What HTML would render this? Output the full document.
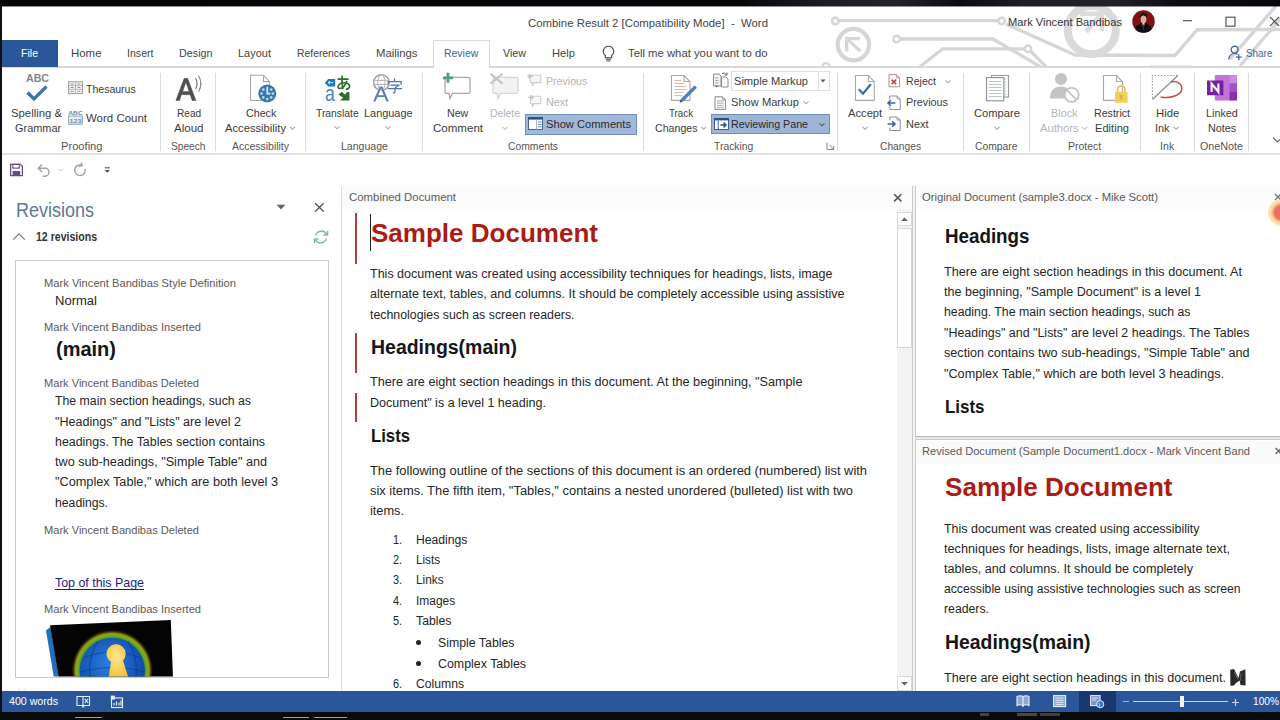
<!DOCTYPE html>
<html><head><meta charset="utf-8"><title>Word</title><style>
html,body{margin:0;padding:0;}
body{width:1280px;height:720px;overflow:hidden;background:#fff;position:relative;font-family:"Liberation Sans",sans-serif;}
.a{position:absolute;display:block;}
.t{position:absolute;white-space:pre;line-height:1;font-family:"Liberation Sans",sans-serif;display:block;}
svg{overflow:visible;}
</style></head>
<body>
<!-- p_frame -->
<div class="a" style="left:0px;top:0px;width:1280px;height:6px;background:#08080d;"></div>
<div class="a" style="left:0px;top:6px;width:1.5px;height:706px;background:#101016;"></div>
<div class="a" style="left:0px;top:712px;width:1280px;height:8px;background:#0b0b0d;"></div>
<div class="a" style="left:75px;top:716.5px;width:26.5px;height:1.8px;background:#a0a0a0;"></div>
<div class="a" style="left:283px;top:716.5px;width:26px;height:1.8px;background:#a0a0a0;"></div>
<div class="a" style="left:314px;top:716.5px;width:33px;height:1.8px;background:#a0a0a0;"></div>
<div class="a" style="left:980px;top:713px;width:9px;height:3px;background:#454545;"></div>
<div class="a" style="left:1017px;top:713px;width:20px;height:3px;background:#484848;"></div>
<div class="a" style="left:1040px;top:713px;width:20px;height:3px;background:#404040;"></div>
<!-- p_title -->
<svg class="a" style="left:0px;top:0px;" width="1280" height="72" viewBox="0 0 1280 72"><polyline points="835,20.7 1001,20.7" fill="none" stroke="#d6d6d6" stroke-width="3.3" stroke-linejoin="round"/><polyline points="897,39 993,39 1040,66.5" fill="none" stroke="#d6d6d6" stroke-width="3.3" stroke-linejoin="round"/><polyline points="920,66.5 943,48.8 1028,48.8" fill="none" stroke="#d6d6d6" stroke-width="3.3" stroke-linejoin="round"/><polyline points="1028,48.8 1046,66.5" fill="none" stroke="#d6d6d6" stroke-width="3.3" stroke-linejoin="round"/><polyline points="1006,24 1075,55 1175,55.5 1197,29.8 1280,29.5" fill="none" stroke="#d6d6d6" stroke-width="3.4" stroke-linejoin="round"/><polyline points="1276,6 1230,59" fill="none" stroke="#d6d6d6" stroke-width="3.4" stroke-linejoin="round"/><polyline points="1282,17 1240,66" fill="none" stroke="#d6d6d6" stroke-width="3.4" stroke-linejoin="round"/><polyline points="1150,66.5 1192,66.5" fill="none" stroke="#d6d6d6" stroke-width="2" stroke-linejoin="round"/><circle cx="853.4" cy="44.6" r="15.7" fill="none" stroke="#d6d6d6" stroke-width="4.2"/><path d="M845 37 H860 v3.300 H850.800 L861.500 50 l-2.400 2.400 L848.300 42 V51.600 H845z" fill="#d6d6d6"/><circle cx="1091.8" cy="30" r="24" fill="none" stroke="#dadada" stroke-width="8"/><path d="M1080 11.600 H1104 V31 h-4.500 V19.500 L1088 33.500 l-3.500 -3.500 L1096.500 16 H1080z" fill="#dcdcdc"/><circle cx="835.3" cy="21" r="3.3" fill="#fff" stroke="#d6d6d6" stroke-width="2.4"/><circle cx="1001.6" cy="21" r="3.3" fill="#fff" stroke="#d6d6d6" stroke-width="2.4"/><circle cx="896.6" cy="39" r="3.3" fill="#fff" stroke="#d6d6d6" stroke-width="2.4"/><circle cx="1028" cy="48.8" r="3.3" fill="#fff" stroke="#d6d6d6" stroke-width="2.4"/><circle cx="826" cy="66.5" r="3.4" fill="#fff" stroke="#d6d6d6" stroke-width="2.4"/></svg>
<div class="a" style="left:0px;top:0px;width:1280px;height:6px;background:linear-gradient(90deg,#050508 0%,#07070b 58%,#1c1c24 64%,#23232b 70%,#0b0b10 75%,#1e1e26 80%,#22222a 87%,#0d0d12 92%,#08080c 100%);"></div>
<div class="a" style="left:0px;top:6px;width:1280px;height:1px;background:rgba(8,8,13,0.45);"></div>
<span class="t" style="left:528.00px;top:18px;font-size:11.5px;color:#444;transform:scaleX(0.9890);transform-origin:0 0;">Combine Result 2 [Compatibility Mode]  -  Word</span>
<span class="t" style="left:1008.00px;top:17px;font-size:11.5px;color:#333;transform:scaleX(0.9657);transform-origin:0 0;">Mark Vincent Bandibas</span>
<svg class="a" style="left:1131.5px;top:9.8px;" width="23" height="23" viewBox="0 0 23 23"><defs><clipPath id="avc"><circle cx="11.5" cy="11.5" r="11.2"/></clipPath></defs><circle cx="11.5" cy="11.5" r="11.2" fill="#7e1215"/><g clip-path="url(#avc)"><path d="M2 24 L4 16.500 L9 13 L14 13 L19 16.500 L21 24z" fill="#100c10"/><path d="M10.400 13 L11.500 20 L12.600 13z" fill="#e9e2e2"/><path d="M11.100 14.500 h0.800 l0.300 5 l-0.700 1 l-0.700 -1z" fill="#3a2a30"/><ellipse cx="11.500" cy="9" rx="2.900" ry="4.200" fill="#dcb0a2"/><path d="M8 8.200 Q8 2.800 11.500 2.800 Q15 2.800 15 8.200 Q13.500 5.400 11.500 5.600 Q9.500 5.400 8 8.200z" fill="#1c0f0e"/></g></svg>
<svg class="a" style="left:0px;top:0px;" width="1280" height="40" viewBox="0 0 1280 40"><path d="M1183 20.7h9" stroke="#555" stroke-width="1.2"/><rect x="1226" y="17.2" width="9" height="9" fill="none" stroke="#555" stroke-width="1.2"/><path d="M1270 17l9 9M1279 17l-9 9" stroke="#555" stroke-width="1.2"/></svg>
<!-- p_ribbon -->
<div class="a" style="left:2px;top:67.5px;width:1278px;height:85.5px;background:#fff;"></div>
<div class="a" style="left:2px;top:66px;width:1278px;height:1.7px;background:#d8d8d8;"></div>
<div class="a" style="left:2px;top:153px;width:1278px;height:1.5px;background:#e2e2e2;"></div>
<div class="a" style="left:2px;top:39.5px;width:55.5px;height:27px;background:#2b579a;"></div>
<span class="t" style="left:20.50px;top:48px;font-size:11.5px;color:#fff;transform:scaleX(0.9174);transform-origin:0 0;">File</span>
<span class="t" style="left:70.50px;top:48px;font-size:11.5px;color:#444;transform:scaleX(0.9942);transform-origin:0 0;">Home</span>
<span class="t" style="left:126.50px;top:48px;font-size:11.5px;color:#444;transform:scaleX(0.9214);transform-origin:0 0;">Insert</span>
<span class="t" style="left:179.00px;top:48px;font-size:11.5px;color:#444;transform:scaleX(0.9358);transform-origin:0 0;">Design</span>
<span class="t" style="left:238.00px;top:48px;font-size:11.5px;color:#444;transform:scaleX(0.9557);transform-origin:0 0;">Layout</span>
<span class="t" style="left:297.00px;top:48px;font-size:11.5px;color:#444;transform:scaleX(0.9012);transform-origin:0 0;">References</span>
<span class="t" style="left:376.00px;top:48px;font-size:11.5px;color:#444;transform:scaleX(0.9838);transform-origin:0 0;">Mailings</span>
<span class="t" style="left:503.00px;top:48px;font-size:11.5px;color:#444;transform:scaleX(0.9304);transform-origin:0 0;">View</span>
<span class="t" style="left:552.00px;top:48px;font-size:11.5px;color:#444;transform:scaleX(0.9724);transform-origin:0 0;">Help</span>
<div class="a" style="left:432.5px;top:39.5px;width:57px;height:28px;background:#fff;border:1px solid #dadada;border-bottom:none;box-sizing:border-box;"></div>
<span class="t" style="left:443.70px;top:48px;font-size:11.5px;color:#41649c;transform:scaleX(0.9096);transform-origin:0 0;">Review</span>
<svg class="a" style="left:600px;top:44px;" width="18" height="20" viewBox="0 0 18 20"><path d="M8.5 2.2 a5.2 5.2 0 0 1 3.2 9.3 v2.2 h-6.4 v-2.2 a5.2 5.2 0 0 1 3.2 -9.3z" fill="none" stroke="#444" stroke-width="1.1"/><path d="M5.8 15.2h5.4M6.6 16.9h3.8" stroke="#444" stroke-width="1"/></svg>
<span class="t" style="left:628.00px;top:48px;font-size:11.5px;color:#444;transform:scaleX(0.9830);transform-origin:0 0;">Tell me what you want to do</span>
<svg class="a" style="left:1227px;top:44px;" width="16" height="18" viewBox="0 0 16 18"><circle cx="7.6" cy="5.6" r="3.4" fill="none" stroke="#3b5f97" stroke-width="1.2"/><path d="M1.8 15.5 c0.2 -4.2 3 -6 5.8 -6 c1.2 0 2.2 0.3 3 0.8" fill="none" stroke="#3b5f97" stroke-width="1.2"/><path d="M11.8 10.2v6M8.8 13.2h6" stroke="#3b5f97" stroke-width="1.2"/></svg>
<span class="t" style="left:1246.00px;top:48px;font-size:11.5px;color:#41649c;transform:scaleX(0.8602);transform-origin:0 0;">Share</span>
<div class="a" style="left:160.0px;top:72.5px;width:1px;height:78px;background:#dcdcdc;"></div>
<div class="a" style="left:214.5px;top:72.5px;width:1px;height:78px;background:#dcdcdc;"></div>
<div class="a" style="left:305.0px;top:72.5px;width:1px;height:78px;background:#dcdcdc;"></div>
<div class="a" style="left:421.5px;top:72.5px;width:1px;height:78px;background:#dcdcdc;"></div>
<div class="a" style="left:643.2px;top:72.5px;width:1px;height:78px;background:#dcdcdc;"></div>
<div class="a" style="left:837.0px;top:72.5px;width:1px;height:78px;background:#dcdcdc;"></div>
<div class="a" style="left:963.2px;top:72.5px;width:1px;height:78px;background:#dcdcdc;"></div>
<div class="a" style="left:1029.0px;top:72.5px;width:1px;height:78px;background:#dcdcdc;"></div>
<div class="a" style="left:1139.5px;top:72.5px;width:1px;height:78px;background:#dcdcdc;"></div>
<div class="a" style="left:1194.0px;top:72.5px;width:1px;height:78px;background:#dcdcdc;"></div>
<div class="a" style="left:1248.2px;top:72.5px;width:1px;height:78px;background:#dcdcdc;"></div>
<span class="t" style="left:60.50px;top:141px;font-size:11px;color:#555;transform:scaleX(1.0129);transform-origin:0 0;">Proofing</span>
<span class="t" style="left:170.50px;top:141px;font-size:11px;color:#555;transform:scaleX(0.9247);transform-origin:0 0;">Speech</span>
<span class="t" style="left:231.70px;top:141px;font-size:11px;color:#555;transform:scaleX(0.9515);transform-origin:0 0;">Accessibility</span>
<span class="t" style="left:340.50px;top:141px;font-size:11px;color:#555;transform:scaleX(0.9603);transform-origin:0 0;">Language</span>
<span class="t" style="left:508.00px;top:141px;font-size:11px;color:#555;transform:scaleX(0.9402);transform-origin:0 0;">Comments</span>
<span class="t" style="left:713.70px;top:141px;font-size:11px;color:#555;transform:scaleX(0.9408);transform-origin:0 0;">Tracking</span>
<span class="t" style="left:879.50px;top:141px;font-size:11px;color:#555;transform:scaleX(0.9311);transform-origin:0 0;">Changes</span>
<span class="t" style="left:975.00px;top:141px;font-size:11px;color:#555;transform:scaleX(0.9394);transform-origin:0 0;">Compare</span>
<span class="t" style="left:1067.50px;top:141px;font-size:11px;color:#555;transform:scaleX(0.9527);transform-origin:0 0;">Protect</span>
<span class="t" style="left:1159.50px;top:141px;font-size:11px;color:#555;transform:scaleX(0.9677);transform-origin:0 0;">Ink</span>
<span class="t" style="left:1200.00px;top:141px;font-size:11px;color:#555;transform:scaleX(0.9767);transform-origin:0 0;">OneNote</span>
<span class="t" style="left:25.70px;top:73px;font-size:11px;color:#858585;font-weight:bold;transform:scaleX(0.9651);transform-origin:0 0;">ABC</span>
<svg class="a" style="left:25px;top:84px;" width="24" height="18" viewBox="0 0 24 18"><path d="M2.5 8.5 L9 15 L21.5 2.5" fill="none" stroke="#3f72ad" stroke-width="3.2"/></svg>
<span class="t" style="left:11.00px;top:108px;font-size:11.5px;color:#3c3c3c;transform:scaleX(0.9848);transform-origin:0 0;">Spelling &amp;</span>
<span class="t" style="left:14.50px;top:123px;font-size:11.5px;color:#3c3c3c;transform:scaleX(0.9515);transform-origin:0 0;">Grammar</span>
<svg class="a" style="left:68px;top:80.5px;" width="15" height="14" viewBox="0 0 15 14"><rect x="0.6" y="0.8" width="13.8" height="11.8" fill="#f4f4f4" stroke="#9a9a9a" stroke-width="1"/><path d="M7.5 1v11.5M1 4.6h13M1 8.4h13" stroke="#b0b0b0" stroke-width="0.9"/><path d="M2.6 3h3M2.6 6.5h3M9.4 3h3M9.4 6.5h3M2.6 10.4h3M9.4 10.4h3" stroke="#8c8c8c" stroke-width="0.9"/></svg>
<span class="t" style="left:86.00px;top:84px;font-size:11.5px;color:#3c3c3c;transform:scaleX(0.9147);transform-origin:0 0;">Thesaurus</span>
<svg class="a" style="left:68px;top:109px;" width="15" height="16" viewBox="0 0 15 16"><text x="0.3" y="5.6" font-family="Liberation Sans" font-weight="bold" font-size="6.2" fill="#6f86a3" textLength="14.4" lengthAdjust="spacingAndGlyphs">ABC</text><rect x="0.6" y="7" width="13.8" height="8.2" fill="#e9eef4" stroke="#8aa0bb" stroke-width="1"/><text x="1.6" y="13.8" font-family="Liberation Sans" font-weight="bold" font-size="6.2" fill="#7088a6" textLength="11.8" lengthAdjust="spacingAndGlyphs">123</text></svg>
<span class="t" style="left:86.00px;top:113px;font-size:11.5px;color:#3c3c3c;transform:scaleX(0.9975);transform-origin:0 0;">Word Count</span>
<svg class="a" style="left:174px;top:73px;" width="30" height="30" viewBox="0 0 30 30"><path d="M2 27.4 L10.2 5.5 h3.4 L21.8 27.4 h-3.6 l-2 -5.8 h-8.8 l-2 5.8z M8.5 18.7 h6.8 l-3.4 -9.9z" fill="#505050" stroke="#505050" stroke-width="0.700" fill-rule="evenodd"/><path d="M21.5 5 q3 5.5 0.2 11" fill="none" stroke="#7a7a7a" stroke-width="1.2"/><path d="M24.5 2.5 q4.6 8 0.2 16" fill="none" stroke="#8a8a8a" stroke-width="1.2"/></svg>
<span class="t" style="left:176.50px;top:108px;font-size:11.5px;color:#3c3c3c;transform:scaleX(0.8802);transform-origin:0 0;">Read</span>
<span class="t" style="left:173.50px;top:123px;font-size:11.5px;color:#3c3c3c;transform:scaleX(1.0029);transform-origin:0 0;">Aloud</span>
<svg class="a" style="left:248px;top:73px;" width="30" height="32" viewBox="0 0 30 32"><path d="M2.500 2.300 h13 l6 6.300 v18.900 h-19z" fill="#fff" stroke="#a6a6a6" stroke-width="1.100"/><path d="M15.500 2.300 v6.300 h6" fill="none" stroke="#a6a6a6" stroke-width="1.100"/><circle cx="19.250" cy="20.500" r="9" fill="#3b75a9"/><circle cx="24.85" cy="20.50" r="1.35" fill="#b9daf4"/><circle cx="23.21" cy="24.46" r="1.35" fill="#b9daf4"/><circle cx="19.25" cy="26.10" r="1.35" fill="#b9daf4"/><circle cx="15.29" cy="24.46" r="1.35" fill="#b9daf4"/><circle cx="13.65" cy="20.50" r="1.35" fill="#b9daf4"/><circle cx="15.29" cy="16.54" r="1.35" fill="#b9daf4"/><circle cx="23.21" cy="16.54" r="1.35" fill="#b9daf4"/><path d="M19.250 13.800 v6.900 h3" fill="none" stroke="#d6ebfc" stroke-width="1.700"/></svg>
<span class="t" style="left:245.70px;top:108px;font-size:11.5px;color:#3c3c3c;transform:scaleX(0.9295);transform-origin:0 0;">Check</span>
<span class="t" style="left:225.00px;top:123px;font-size:11.5px;color:#3c3c3c;transform:scaleX(0.9740);transform-origin:0 0;">Accessibility</span>
<svg class="a" style="left:323px;top:73px;" width="30" height="30" viewBox="0 0 30 30"><path d="M1.800 9.700 L5.200 6 h7 v7.400 h-7z" fill="#1b7ac6"/><path d="M7 8 l-1.800 1.700 l1.800 1.700 M5.400 9.700 h4.800" fill="none" stroke="#e8f3fc" stroke-width="1"/><text x="2" y="27.700" font-family="Liberation Sans" font-size="21.500" fill="#3f88c8" textLength="9.800" lengthAdjust="spacingAndGlyphs">a</text><path d="M14.600 6.200 h11 M19.200 2.600 c-0.400 4.600 -0.200 9 0.600 13.400" fill="none" stroke="#2b6e2b" stroke-width="1.700"/><path d="M23.800 7.800 c-1 4.400 -4.400 8.200 -7.400 7.600 c-2.400 -0.600 -1.400 -4.200 2 -5.200 c4 -1.200 8.200 0.400 8.200 3 c0 1.800 -1.600 2.800 -3.600 3.200" fill="none" stroke="#2b6e2b" stroke-width="1.600"/><path d="M15.400 21.400 l3.400 -2.600 l3.200 3 l2 -2.800 h2.400 v8.400 h-9.400 l3.200 -2.600z" fill="#2b6e2b"/></svg>
<svg class="a" style="left:371px;top:72px;" width="32" height="31" viewBox="0 0 32 31"><circle cx="10.400" cy="10.500" r="7.800" fill="#fff" stroke="#9c9c9c" stroke-width="1.500"/><path d="M3.200 8.400 h14.400 M3.400 12.600 h14" fill="none" stroke="#b2b2b2" stroke-width="1"/><ellipse cx="10.400" cy="10.500" rx="3.600" ry="7.800" fill="none" stroke="#b2b2b2" stroke-width="1"/><path d="M2.200 29.600 L8.700 14.400 h2.600 L17.800 29.600 h-2.300 l-1.900 -4.600 h-7.200 l-1.900 4.600z M7.200 23.200 h5.600 l-2.800 -6.800z" fill="#5c7fae" fill-rule="evenodd" stroke="#fff" stroke-width="0.700" paint-order="stroke"/><path d="M17.200 12.400 v-2.800 h13 v2.800 M23.600 6.200 v3.200 M19.400 13.200 h8.400 l-3.800 2.800 M16.600 16.600 h14.400 M24 16 v3.600 q0 1.400 -2.200 1.200" fill="none" stroke="#4a7ab2" stroke-width="1.300"/></svg>
<span class="t" style="left:316.00px;top:108px;font-size:11.5px;color:#3c3c3c;transform:scaleX(0.8987);transform-origin:0 0;">Translate</span>
<span class="t" style="left:364.00px;top:108px;font-size:11.5px;color:#3c3c3c;transform:scaleX(0.9479);transform-origin:0 0;">Language</span>
<svg class="a" style="left:441px;top:72px;" width="32" height="30" viewBox="0 0 32 30"><path d="M5.5 5.4 h22 q1.500 0 1.500 1.500 v13 q0 1.500 -1.500 1.500 h-16 l-2.600 5 l-0.800 -5 h-2.600 q-1.500 0 -1.500 -1.500 v-13 q0 -1.500 1.500 -1.500z" fill="#fff" stroke="#a8a8a8" stroke-width="1.3"/><path d="M7 0.8 v10 M2 5.8 h10" stroke="#5a9a7c" stroke-width="2.8"/></svg>
<span class="t" style="left:446.70px;top:108px;font-size:11.5px;color:#3c3c3c;transform:scaleX(0.9258);transform-origin:0 0;">New</span>
<span class="t" style="left:432.50px;top:123px;font-size:11.5px;color:#3c3c3c;transform:scaleX(1.0030);transform-origin:0 0;">Comment</span>
<svg class="a" style="left:489px;top:72px;" width="32" height="30" viewBox="0 0 32 30"><path d="M5.5 5.4 h22 q1.500 0 1.500 1.500 v13 q0 1.500 -1.500 1.500 h-16 l-2.600 5 l-0.800 -5 h-2.600 q-1.500 0 -1.500 -1.500 v-13 q0 -1.500 1.500 -1.500z" fill="#f3f1f2" stroke="#d6d6d6" stroke-width="1.3"/><path d="M1.5 1.8 l12 10 M13.5 1.8 l-12 10" stroke="#c2c2c2" stroke-width="2"/></svg>
<span class="t" style="left:490.00px;top:108px;font-size:11.5px;color:#b4b4b4;transform:scaleX(0.9024);transform-origin:0 0;">Delete</span>
<svg class="a" style="left:527px;top:73px;" width="15" height="14" viewBox="0 0 15 14"><path d="M3.4 2.2 h10.4 v7.4 h-6.8 l-1.6 2.6 l-0.2 -2.6 h-1.8z" fill="#f6f6f6" stroke="#cdcdcd" stroke-width="1.1"/><path d="M1 3.4 h5 M3.2 1.2 L1 3.4 l2.2 2.2" fill="none" stroke="#c0c6c2" stroke-width="1.4"/></svg>
<span class="t" style="left:545.70px;top:76px;font-size:11.5px;color:#b4b4b4;transform:scaleX(0.9230);transform-origin:0 0;">Previous</span>
<svg class="a" style="left:527px;top:94px;" width="15" height="14" viewBox="0 0 15 14"><path d="M3.4 2.2 h10.4 v7.4 h-6.8 l-1.6 2.6 l-0.2 -2.6 h-1.8z" fill="#f6f6f6" stroke="#cdcdcd" stroke-width="1.1"/><path d="M1 3.4 h5 M3.8 1.2 L6 3.4 l-2.2 2.2" fill="none" stroke="#c0c6c2" stroke-width="1.4"/></svg>
<span class="t" style="left:545.70px;top:97px;font-size:11.5px;color:#b4b4b4;transform:scaleX(0.9431);transform-origin:0 0;">Next</span>
<div class="a" style="left:525px;top:113.5px;width:112px;height:21px;background:#a3b8d9;border:1px solid #7391c0;box-sizing:border-box;"></div>
<svg class="a" style="left:528px;top:117px;" width="15" height="13" viewBox="0 0 15 13"><rect x="0.5" y="0.5" width="14" height="12" fill="#fff" stroke="#4a6796" stroke-width="1"/><rect x="0" y="0" width="15" height="2.6" fill="#2f4f86"/><path d="M8.6 2.6v10" stroke="#8fa3c4" stroke-width="0.9"/><path d="M10 5h3.6M10 7.4h3.6M10 9.8h3.6" stroke="#6f86ad" stroke-width="1"/></svg>
<span class="t" style="left:545.70px;top:119px;font-size:11.5px;color:#2a2a2a;transform:scaleX(0.9708);transform-origin:0 0;">Show Comments</span>
<svg class="a" style="left:668px;top:73px;" width="30" height="30" viewBox="0 0 30 30"><path d="M3.5 2.5 h12.5 l6 6 v18.9 h-18.5z" fill="#fff" stroke="#a9a9a9" stroke-width="1.1"/><path d="M16 2.5 v6 h6" fill="none" stroke="#a9a9a9" stroke-width="1.1"/><path d="M6.5 7.500h7M6.5 13.500h12M6.5 19.500h9" stroke="#d9b8b4" stroke-width="1"/><path d="M6.5 10.500h10M6.5 16.500h12M6.5 22.500h8" stroke="#c4c4c4" stroke-width="1"/><path d="M26.600 12.800 l2 1.900 L15.400 28 l-3.400 1.300 l1.200 -3.400z" fill="#4a7fbe" stroke="#3a6aa6" stroke-width="0.5"/><path d="M11.6 29.6 l1 -2.6 l1.6 1.6z" fill="#444"/></svg>
<span class="t" style="left:669.00px;top:108px;font-size:11.5px;color:#3c3c3c;transform:scaleX(0.8473);transform-origin:0 0;">Track</span>
<span class="t" style="left:654.50px;top:123px;font-size:11.5px;color:#3c3c3c;transform:scaleX(0.9232);transform-origin:0 0;">Changes</span>
<svg class="a" style="left:712px;top:72px;" width="17" height="16" viewBox="0 0 17 16"><path d="M1.5 2 h5.5 l2 2 v10 h-7.5z" fill="#f3f3f3" stroke="#8e8e8e" stroke-width="1"/><path d="M9.5 5 h4.5 l2 2 v8 h-6.5z" fill="#fff" stroke="#8e8e8e" stroke-width="1"/><path d="M3 6h3.5M3 8.5h3.5M3 11h3.5" stroke="#a7a7a7" stroke-width="0.9"/><path d="M10 1.5 q3 -1.5 5 1.5 M15 0.5 v2.6 h-2.6" fill="none" stroke="#6a6a6a" stroke-width="1"/><path d="M4.5 15.6 l1.8 -2 l-3.6 0z" fill="#6a6a6a"/></svg>
<div class="a" style="left:731px;top:70.5px;width:98.5px;height:20.5px;background:#fff;border:1px solid #dedede;box-sizing:border-box;"></div>
<div class="a" style="left:817.5px;top:70.5px;width:1px;height:20.5px;background:#e2e2e2;"></div>
<span class="t" style="left:734.00px;top:76px;font-size:11.5px;color:#3c3c3c;transform:scaleX(0.9648);transform-origin:0 0;">Simple Markup</span>
<svg class="a" style="left:714px;top:95.5px;" width="13" height="14" viewBox="0 0 13 14"><path d="M1 0.8 h7.6 l3 3 v9.6 h-10.6z" fill="#fff" stroke="#8b8b8b" stroke-width="1"/><path d="M8.6 0.8 v3 h3" fill="none" stroke="#8b8b8b" stroke-width="0.9"/><path d="M3 5h6.6M3 7.2h6.6M3 9.4h6.6M3 11.4h6.6" stroke="#9d9d9d" stroke-width="0.9"/></svg>
<span class="t" style="left:731.00px;top:97px;font-size:11.5px;color:#3c3c3c;transform:scaleX(0.9671);transform-origin:0 0;">Show Markup</span>
<div class="a" style="left:710.5px;top:113.7px;width:119.5px;height:20.8px;background:#9fb5d8;border:1px solid #6f8cbc;box-sizing:border-box;"></div>
<svg class="a" style="left:713.5px;top:117.5px;" width="15" height="12" viewBox="0 0 15 12"><rect x="0.5" y="0.5" width="14" height="11" fill="#fff" stroke="#3f5f93" stroke-width="1"/><rect x="0" y="0" width="15" height="2.4" fill="#2f4f86"/><path d="M4.2 2.4v9.4" stroke="#3f5f93" stroke-width="1"/><path d="M6.4 7h5.4 M9.6 4.6 L12 7 l-2.4 2.4" fill="none" stroke="#2f4f86" stroke-width="1.5"/></svg>
<span class="t" style="left:731.00px;top:119px;font-size:11.5px;color:#2a2a2a;transform:scaleX(0.9265);transform-origin:0 0;">Reviewing Pane</span>
<svg class="a" style="left:852px;top:73px;" width="26" height="30" viewBox="0 0 26 30"><path d="M3.5 2.5 h12.8 l6 6 v18.9 h-18.8z" fill="#fff" stroke="#a9a9a9" stroke-width="1.1"/><path d="M16.3 2.5 v6 h6" fill="none" stroke="#a9a9a9" stroke-width="1.1"/><path d="M6.800 16.200 l4.200 4.400 l7.800 -9.400" fill="none" stroke="#3d6aa3" stroke-width="2.200"/></svg>
<span class="t" style="left:847.50px;top:108px;font-size:11.5px;color:#3c3c3c;transform:scaleX(0.9728);transform-origin:0 0;">Accept</span>
<svg class="a" style="left:888px;top:73px;" width="13" height="15" viewBox="0 0 13 15"><path d="M1 1.6 h7.4 l3.2 3.2 v9 h-10.6z" fill="#fff" stroke="#b28b8b" stroke-width="1"/><path d="M8.4 1.6 v3.2 h3.2" fill="none" stroke="#b28b8b" stroke-width="0.9"/><path d="M3.6 6.6 l4.6 4.6 M8.2 6.6 l-4.6 4.6" stroke="#c8374a" stroke-width="1.5"/></svg>
<span class="t" style="left:905.50px;top:76px;font-size:11.5px;color:#3c3c3c;transform:scaleX(0.9203);transform-origin:0 0;">Reject</span>
<svg class="a" style="left:886px;top:94.7px;" width="15" height="16" viewBox="0 0 15 16"><path d="M3.800 11.500 v3 h10.400 v-10.500 l-3 -3 h-7.400 v3.500" fill="#fff" stroke="#8f8f8f" stroke-width="1"/><path d="M11.1 1 v3 h3" fill="none" stroke="#8f8f8f" stroke-width="0.9"/><path d="M2 8 h7.400 M4.800 5.200 L2 8 l2.800 2.800" fill="none" stroke="#3565a8" stroke-width="1.600"/></svg>
<span class="t" style="left:905.50px;top:97px;font-size:11.5px;color:#3c3c3c;transform:scaleX(0.9387);transform-origin:0 0;">Previous</span>
<svg class="a" style="left:886px;top:116px;" width="15" height="16" viewBox="0 0 15 16"><path d="M3.800 11.500 v3 h10.400 v-10.500 l-3 -3 h-7.400 v3.500" fill="#fff" stroke="#8f8f8f" stroke-width="1"/><path d="M11.1 1 v3 h3" fill="none" stroke="#8f8f8f" stroke-width="0.9"/><path d="M1.600 8 h7.400 M6.200 5.200 L9 8 l-2.800 2.800" fill="none" stroke="#3565a8" stroke-width="1.600"/></svg>
<span class="t" style="left:905.50px;top:119px;font-size:11.5px;color:#3c3c3c;transform:scaleX(0.9515);transform-origin:0 0;">Next</span>
<svg class="a" style="left:984px;top:73px;" width="28" height="30" viewBox="0 0 28 30"><rect x="7.5" y="2.5" width="17" height="21.5" fill="#fff" stroke="#9c9c9c" stroke-width="1.1"/><path d="M19.5 6h3M19.5 9h3M19.5 12h3M19.5 15h3M19.5 18h3M19.5 21h3" stroke="#c6c6c6" stroke-width="0.9"/><rect x="2.5" y="4.600" width="17.300" height="23.200" fill="#fff" stroke="#8f8f8f" stroke-width="1.1"/><path d="M4.8 8.500h12.600M4.8 11.500h12.600M4.8 14.500h12.600M4.8 17.500h12.600M4.8 20.500h12.600M4.8 23.500h12.600" stroke="#b4c6de" stroke-width="1.1"/></svg>
<span class="t" style="left:974.00px;top:108px;font-size:11.5px;color:#3c3c3c;transform:scaleX(0.9725);transform-origin:0 0;">Compare</span>
<svg class="a" style="left:1048px;top:72px;" width="32" height="31" viewBox="0 0 32 31"><circle cx="13" cy="7" r="6" fill="#c4c4c4"/><path d="M2 26.6 c0 -8 4 -12 11 -12 c7 0 11 4 11 12z" fill="#c4c4c4"/><circle cx="23.7" cy="22.9" r="7" fill="#fff" stroke="#c4c4c4" stroke-width="1.8"/><path d="M18.9 18.2 l9.6 9.4" stroke="#c4c4c4" stroke-width="1.8"/></svg>
<span class="t" style="left:1051.00px;top:108px;font-size:11.5px;color:#b4b4b4;transform:scaleX(0.9423);transform-origin:0 0;">Block</span>
<span class="t" style="left:1040.00px;top:123px;font-size:11.5px;color:#b4b4b4;transform:scaleX(0.9764);transform-origin:0 0;">Authors</span>
<svg class="a" style="left:1101px;top:73px;" width="28" height="31" viewBox="0 0 28 31"><path d="M2.5 2.5 h13 l6 6 v18.9 h-19z" fill="#fff" stroke="#a9a9a9" stroke-width="1.1"/><path d="M15.5 2.5 v6 h6" fill="none" stroke="#a9a9a9" stroke-width="1.1"/><path d="M16.6 19 v-2.4 a3.7 3.7 0 0 1 7.4 0 v2.4" fill="none" stroke="#e3c66a" stroke-width="1.8"/><rect x="14" y="18.8" width="12.6" height="11" fill="#f1cf5d"/><rect x="19.4" y="22" width="1.8" height="4.4" fill="#d6a92c"/></svg>
<span class="t" style="left:1094.00px;top:108px;font-size:11.5px;color:#3c3c3c;transform:scaleX(0.9236);transform-origin:0 0;">Restrict</span>
<span class="t" style="left:1095.00px;top:123px;font-size:11.5px;color:#3c3c3c;transform:scaleX(0.9669);transform-origin:0 0;">Editing</span>
<svg class="a" style="left:1151px;top:73px;" width="33" height="29" viewBox="0 0 33 29"><path d="M26.8 2.5 H1.4 V26.5" fill="none" stroke="#9a9a9a" stroke-width="1.1" stroke-dasharray="1.5 1.6"/><path d="M26.8 2.5 L1.4 26.5" stroke="#8a8a8a" stroke-width="1.2"/><path d="M20 9 c6 -1.6 11.4 2 10.8 7.4 c-0.6 5.6 -11 9.600 -21.200 7.600" fill="none" stroke="#c94f3b" stroke-width="1.5"/></svg>
<span class="t" style="left:1155.70px;top:108px;font-size:11.5px;color:#3c3c3c;transform:scaleX(0.9851);transform-origin:0 0;">Hide</span>
<span class="t" style="left:1155.00px;top:123px;font-size:11.5px;color:#3c3c3c;transform:scaleX(0.9452);transform-origin:0 0;">Ink</span>
<svg class="a" style="left:1206px;top:74px;" width="32" height="27" viewBox="0 0 32 27"><rect x="8.8" y="1" width="22.2" height="25.4" rx="1" fill="#c075d8"/><rect x="23.6" y="1" width="7.4" height="8.4" fill="#c98be0"/><rect x="23.6" y="9.4" width="7.4" height="8.4" fill="#a84fc6"/><rect x="23.6" y="17.8" width="7.4" height="8.6" fill="#8e2fb0"/><rect x="1" y="6.6" width="16.4" height="14.6" rx="0.6" fill="#7a1fa2"/><path d="M5.6 18 v-8.4 l6.8 8.400 v-8.4" fill="none" stroke="#fff" stroke-width="2.1"/></svg>
<span class="t" style="left:1205.70px;top:108px;font-size:11.5px;color:#3c3c3c;transform:scaleX(0.9384);transform-origin:0 0;">Linked</span>
<span class="t" style="left:1207.50px;top:123px;font-size:11.5px;color:#3c3c3c;transform:scaleX(0.9387);transform-origin:0 0;">Notes</span>
<svg class="a" style="left:0px;top:0px;" width="1280" height="160" viewBox="0 0 1280 160"><path d="M290.0 126.8 L292.5 129.3 L295.0 126.8" fill="none" stroke="#a6a6a6" stroke-width="1.1"/><path d="M334.5 126.3 L337 128.8 L339.5 126.3" fill="none" stroke="#a6a6a6" stroke-width="1.1"/><path d="M385.5 126.3 L388 128.8 L390.5 126.3" fill="none" stroke="#a6a6a6" stroke-width="1.1"/><path d="M502.5 126.8 L505 129.3 L507.5 126.8" fill="none" stroke="#c4c4c4" stroke-width="1.1"/><path d="M701.2 126.8 L703.7 129.3 L706.2 126.8" fill="none" stroke="#a6a6a6" stroke-width="1.1"/><path d="M820.5 79.5 h5 l-2.5 3z" fill="#555"/><path d="M803.5 101.3 L806 103.8 L808.5 101.3" fill="none" stroke="#a6a6a6" stroke-width="1.1"/><path d="M819.5 123.3 L822 125.8 L824.5 123.3" fill="none" stroke="#555" stroke-width="1.1"/><path d="M827 142.5 h-0 v7 h7 M829.5 145 l4 4 M833.7 146 v3.2 h-3.2" fill="none" stroke="#888" stroke-width="1"/><path d="M862.5 126.8 L865 129.3 L867.5 126.8" fill="none" stroke="#a6a6a6" stroke-width="1.1"/><path d="M945.5 80.3 L948 82.8 L950.5 80.3" fill="none" stroke="#a6a6a6" stroke-width="1.1"/><path d="M994.5 126.8 L997 129.3 L999.5 126.8" fill="none" stroke="#a6a6a6" stroke-width="1.1"/><path d="M1082.0 126.8 L1084.5 129.3 L1087.0 126.8" fill="none" stroke="#c4c4c4" stroke-width="1.1"/><path d="M1173.5 126.8 L1176 129.3 L1178.5 126.8" fill="none" stroke="#a6a6a6" stroke-width="1.1"/><path d="M1273 137.5 l4.5 4.5 l4.5 -4.5" fill="none" stroke="#666" stroke-width="1.2"/></svg>
<svg class="a" style="left:9px;top:162px;" width="120" height="16" viewBox="0 0 120 16"><path d="M1.6 2.3 h9.8 l2 2 v9.300 h-11.8z" fill="none" stroke="#654d86" stroke-width="1.3"/><rect x="3.8" y="2.3" width="6.4" height="3.8" fill="none" stroke="#654d86" stroke-width="1.1"/><rect x="3.6" y="9" width="7.6" height="4.600" fill="#654d86"/><path d="M33 2.600 L29.2 6.2 L33 9.8 M29.4 6.2 h6.6 a4 4 0 0 1 0 8 h-2" fill="none" stroke="#a2a2a2" stroke-width="1.4"/><path d="M49.500 6.800 l2.200 2.400 l2.200 -2.400" fill="none" stroke="#c6c6c6" stroke-width="1"/><path d="M72.400 3.200 a5.300 5.300 0 1 0 3.600 3.600 M72 0.600 l1.200 3 l-3.200 0.800" fill="none" stroke="#a2a2a2" stroke-width="1.4"/><path d="M95.800 5.800 h5" stroke="#555" stroke-width="1.1"/><path d="M95.600 8 h5.400 l-2.700 2.800z" fill="#555"/></svg>
<!-- p_rev -->
<div class="a" style="left:340.5px;top:186px;width:1.2px;height:505px;background:#dedede;"></div>
<span class="t" style="left:16.00px;top:201px;font-size:19.5px;color:#5d7797;transform:scaleX(0.9227);transform-origin:0 0;">Revisions</span>
<svg class="a" style="left:275px;top:203px;" width="12" height="8" viewBox="0 0 12 8"><path d="M1.600 1.800 h8.800 l-4.400 4.600z" fill="#666"/></svg>
<svg class="a" style="left:314px;top:202px;" width="11" height="11" viewBox="0 0 11 11"><path d="M1.200 1.200 l8.400 8.400 M9.600 1.200 l-8.400 8.400" stroke="#555" stroke-width="1.4"/></svg>
<svg class="a" style="left:12px;top:232px;" width="14" height="9" viewBox="0 0 14 9"><path d="M1.200 7.600 L7 1.800 L12.800 7.600" fill="none" stroke="#777" stroke-width="1.2"/></svg>
<span class="t" style="left:36.00px;top:231px;font-size:12px;color:#333;font-weight:bold;transform:scaleX(0.8793);transform-origin:0 0;">12 revisions</span>
<svg class="a" style="left:313px;top:229px;" width="16" height="16" viewBox="0 0 16 16"><path d="M13.600 5.200 A6 6 0 0 0 2.600 6.400" fill="none" stroke="#86b9a0" stroke-width="1.5"/><path d="M2.400 10.800 A6 6 0 0 0 13.400 9.600" fill="none" stroke="#86b9a0" stroke-width="1.5"/><path d="M14.600 1.800 v4.200 h-4.200" fill="none" stroke="#86b9a0" stroke-width="1.4"/><path d="M1.400 14.200 v-4.200 h4.200" fill="none" stroke="#86b9a0" stroke-width="1.4"/></svg>
<div class="a" style="left:15px;top:260px;width:314px;height:417.5px;background:#fff;border:1px solid #c9c9c9;box-sizing:border-box;"></div>
<span class="t" style="left:44.00px;top:278px;font-size:11.5px;color:#5a5a5a;transform:scaleX(0.9699);transform-origin:0 0;">Mark Vincent Bandibas Style Definition</span>
<span class="t" style="left:55.00px;top:295px;font-size:12px;color:#262626;transform:scaleX(1.0860);transform-origin:0 0;">Normal</span>
<span class="t" style="left:44.00px;top:322px;font-size:11.5px;color:#5a5a5a;transform:scaleX(0.9644);transform-origin:0 0;">Mark Vincent Bandibas Inserted</span>
<span class="t" style="left:56.00px;top:339px;font-size:20px;color:#151515;font-weight:bold;transform:scaleX(1.0000);transform-origin:0 0;">(main)</span>
<span class="t" style="left:44.00px;top:378px;font-size:11.5px;color:#5a5a5a;transform:scaleX(0.9634);transform-origin:0 0;">Mark Vincent Bandibas Deleted</span>
<span class="t" style="left:55.00px;top:395px;font-size:12.5px;color:#262626;transform:scaleX(0.9828);transform-origin:0 0;">The main section headings, such as</span>
<span class="t" style="left:55.00px;top:416px;font-size:12.5px;color:#262626;transform:scaleX(1.0042);transform-origin:0 0;">"Headings" and "Lists" are level 2</span>
<span class="t" style="left:55.00px;top:436px;font-size:12.5px;color:#262626;transform:scaleX(0.9929);transform-origin:0 0;">headings. The Tables section contains</span>
<span class="t" style="left:55.00px;top:456px;font-size:12.5px;color:#262626;transform:scaleX(1.0121);transform-origin:0 0;">two sub-headings, "Simple Table" and</span>
<span class="t" style="left:55.00px;top:476px;font-size:12.5px;color:#262626;transform:scaleX(1.0174);transform-origin:0 0;">"Complex Table," which are both level 3</span>
<span class="t" style="left:55.00px;top:497px;font-size:12.5px;color:#262626;transform:scaleX(0.9776);transform-origin:0 0;">headings.</span>
<span class="t" style="left:44.00px;top:525px;font-size:11.5px;color:#5a5a5a;transform:scaleX(0.9634);transform-origin:0 0;">Mark Vincent Bandibas Deleted</span>
<span class="t" style="left:55.00px;top:576px;font-size:13px;color:#1f1a8a;transform:scaleX(0.9546);transform-origin:0 0;">Top of this Page</span>
<div class="a" style="left:55px;top:588.6px;width:89px;height:1.1px;background:#1f1a8a;"></div>
<span class="t" style="left:44.00px;top:604px;font-size:11.5px;color:#5a5a5a;transform:scaleX(0.9644);transform-origin:0 0;">Mark Vincent Bandibas Inserted</span>
<svg class="a" style="left:46px;top:620px;" width="130" height="57" viewBox="0 0 130 57"><defs><clipPath id="pc"><rect x="-2" y="-2" width="134" height="58.500"/></clipPath><radialGradient id="gl" cx="0.5" cy="0.5" r="0.5"><stop offset="0.78" stop-color="#2c8a3a"/><stop offset="0.84" stop-color="#6fae1c"/><stop offset="0.9" stop-color="#b5b21a" stop-opacity="0.85"/><stop offset="1" stop-color="#2a2400" stop-opacity="0"/></radialGradient><radialGradient id="gb" cx="0.45" cy="0.4" r="0.7"><stop offset="0" stop-color="#2a7fe0"/><stop offset="1" stop-color="#0a3c9c"/></radialGradient><radialGradient id="gk" cx="0.45" cy="0.4" r="0.6"><stop offset="0" stop-color="#fde992"/><stop offset="1" stop-color="#f3c13a"/></radialGradient></defs><g clip-path="url(#pc)"><path d="M0 10.500 L4.500 7 L13 58 L8 58z" fill="#1c70bd"/><path d="M4 5.200 L124.800 0 L127 58 L12.800 58z" fill="#040404"/><circle cx="66.300" cy="50.400" r="41" fill="url(#gl)"/><circle cx="66.300" cy="50.400" r="32.500" fill="url(#gb)"/><path d="M38 38 q28 -12 56 0 M34.500 52 q32 -9 64 0 M52 21 q-10 16 -8 36 M82 21 q10 16 8 36" fill="none" stroke="#0a3687" stroke-width="1.200" opacity="0.600"/><path d="M62.500 58 L65 42 a9.600 9.600 0 1 1 12 -1.500 L82.500 58z" fill="url(#gk)"/></g></svg>
<!-- p_mid -->
<div class="a" style="left:342px;top:185px;width:570px;height:24px;background:#fbfbfb;"></div>
<span class="t" style="left:349.00px;top:192px;font-size:11px;color:#5a5a5a;transform:scaleX(1.0355);transform-origin:0 0;">Combined Document</span>
<svg class="a" style="left:893px;top:193px;" width="10" height="10" viewBox="0 0 10 10"><path d="M1.200 1.200 l7.200 7.200 M8.400 1.200 l-7.200 7.200" stroke="#555" stroke-width="1.500"/></svg>
<div class="a" style="left:355px;top:213.3px;width:2.2px;height:50.3px;background:#b23d38;"></div>
<div class="a" style="left:355px;top:332.5px;width:2.2px;height:40px;background:#b23d38;"></div>
<div class="a" style="left:355px;top:392.5px;width:2.2px;height:29px;background:#b23d38;"></div>
<div class="a" style="left:370px;top:213.7px;width:1.1px;height:37px;background:#222;"></div>
<span class="t" style="left:371.00px;top:221px;font-size:25.5px;color:#aa1c15;font-weight:bold;transform:scaleX(1.0204);transform-origin:0 0;">Sample Document</span>
<span class="t" style="left:370.00px;top:268px;font-size:12.5px;color:#262626;transform:scaleX(1.0010);transform-origin:0 0;">This document was created using accessibility techniques for headings, lists, image</span>
<span class="t" style="left:370.00px;top:288px;font-size:12.5px;color:#262626;transform:scaleX(1.0058);transform-origin:0 0;">alternate text, tables, and columns. It should be completely accessible using assistive</span>
<span class="t" style="left:370.00px;top:309px;font-size:12.5px;color:#262626;transform:scaleX(0.9876);transform-origin:0 0;">technologies such as screen readers.</span>
<span class="t" style="left:371.00px;top:338px;font-size:19.5px;color:#151515;font-weight:bold;transform:scaleX(0.9981);transform-origin:0 0;">Headings(main)</span>
<span class="t" style="left:370.00px;top:376px;font-size:12.5px;color:#262626;transform:scaleX(1.0130);transform-origin:0 0;">There are eight section headings in this document. At the beginning, "Sample</span>
<span class="t" style="left:370.00px;top:397px;font-size:12.5px;color:#262626;transform:scaleX(1.0036);transform-origin:0 0;">Document" is a level 1 heading.</span>
<span class="t" style="left:371.00px;top:426px;font-size:19px;color:#151515;font-weight:bold;transform:scaleX(0.8794);transform-origin:0 0;">Lists</span>
<span class="t" style="left:370.00px;top:465px;font-size:12.5px;color:#262626;transform:scaleX(1.0307);transform-origin:0 0;">The following outline of the sections of this document is an ordered (numbered) list with</span>
<span class="t" style="left:370.00px;top:485px;font-size:12.5px;color:#262626;transform:scaleX(1.0323);transform-origin:0 0;">six items. The fifth item, "Tables," contains a nested unordered (bulleted) list with two</span>
<span class="t" style="left:370.00px;top:505px;font-size:12.5px;color:#262626;transform:scaleX(1.0199);transform-origin:0 0;">items.</span>
<span class="t" style="left:393.20px;top:534px;font-size:12.5px;color:#262626;transform:scaleX(0.8729);transform-origin:0 0;">1.</span>
<span class="t" style="left:415.50px;top:534px;font-size:12.5px;color:#262626;transform:scaleX(0.9732);transform-origin:0 0;">Headings</span>
<span class="t" style="left:393.20px;top:554px;font-size:12.5px;color:#262626;transform:scaleX(0.8729);transform-origin:0 0;">2.</span>
<span class="t" style="left:415.50px;top:554px;font-size:12.5px;color:#262626;transform:scaleX(0.9377);transform-origin:0 0;">Lists</span>
<span class="t" style="left:393.20px;top:574px;font-size:12.5px;color:#262626;transform:scaleX(0.8729);transform-origin:0 0;">3.</span>
<span class="t" style="left:415.50px;top:574px;font-size:12.5px;color:#262626;transform:scaleX(0.9458);transform-origin:0 0;">Links</span>
<span class="t" style="left:393.20px;top:595px;font-size:12.5px;color:#262626;transform:scaleX(0.8729);transform-origin:0 0;">4.</span>
<span class="t" style="left:415.50px;top:595px;font-size:12.5px;color:#262626;transform:scaleX(0.9563);transform-origin:0 0;">Images</span>
<span class="t" style="left:393.20px;top:615px;font-size:12.5px;color:#262626;transform:scaleX(0.8729);transform-origin:0 0;">5.</span>
<span class="t" style="left:415.50px;top:615px;font-size:12.5px;color:#262626;transform:scaleX(0.9825);transform-origin:0 0;">Tables</span>
<span class="t" style="left:393.20px;top:678px;font-size:12.5px;color:#262626;transform:scaleX(0.8729);transform-origin:0 0;">6.</span>
<span class="t" style="left:415.50px;top:678px;font-size:12.5px;color:#262626;transform:scaleX(0.9732);transform-origin:0 0;">Columns</span>
<div class="a" style="left:416px;top:640px;width:5px;height:5px;background:#222;border-radius:50%;"></div>
<span class="t" style="left:437.50px;top:637px;font-size:12.5px;color:#262626;transform:scaleX(0.9859);transform-origin:0 0;">Simple Tables</span>
<div class="a" style="left:416px;top:661px;width:5px;height:5px;background:#222;border-radius:50%;"></div>
<span class="t" style="left:437.50px;top:658px;font-size:12.5px;color:#262626;transform:scaleX(0.9921);transform-origin:0 0;">Complex Tables</span>
<div class="a" style="left:897px;top:209px;width:15px;height:482px;background:#f3f3f3;"></div>
<div class="a" style="left:897px;top:212px;width:14.5px;height:13.5px;background:#fdfdfd;border:1px solid #dadada;box-sizing:border-box;"></div>
<svg class="a" style="left:900px;top:216px;" width="9" height="6" viewBox="0 0 9 6"><path d="M1 5 L4.500 1.400 L8 5z" fill="#666"/></svg>
<div class="a" style="left:897px;top:228px;width:14.5px;height:120px;background:#fff;border:1px solid #d6d6d6;box-sizing:border-box;"></div>
<div class="a" style="left:897px;top:676px;width:14.5px;height:14.5px;background:#fdfdfd;border:1px solid #dadada;box-sizing:border-box;"></div>
<svg class="a" style="left:900px;top:680.5px;" width="9" height="6" viewBox="0 0 9 6"><path d="M1 1 L4.500 4.600 L8 1z" fill="#666"/></svg>
<div class="a" style="left:912px;top:186px;width:1.2px;height:505px;background:#c9c9c9;"></div>
<div class="a" style="left:913.2px;top:186px;width:1.6px;height:505px;background:#f4f4f4;"></div>
<div class="a" style="left:914.8px;top:186px;width:1.2px;height:505px;background:#c9c9c9;"></div>
<!-- p_right -->
<div class="a" style="left:916px;top:185px;width:364px;height:24px;background:#fbfbfb;"></div>
<div class="a" style="left:916px;top:440.5px;width:364px;height:23px;background:#fafafa;"></div>
<span class="t" style="left:922.00px;top:192px;font-size:11px;color:#5a5a5a;transform:scaleX(1.0240);transform-origin:0 0;">Original Document (sample3.docx - Mike Scott)</span>
<span class="t" style="left:944.50px;top:227px;font-size:19.5px;color:#151515;font-weight:bold;transform:scaleX(0.9627);transform-origin:0 0;">Headings</span>
<span class="t" style="left:944.00px;top:266px;font-size:12.5px;color:#262626;transform:scaleX(1.0114);transform-origin:0 0;">There are eight section headings in this document. At</span>
<span class="t" style="left:944.00px;top:286px;font-size:12.5px;color:#262626;transform:scaleX(1.0029);transform-origin:0 0;">the beginning, "Sample Document" is a level 1</span>
<span class="t" style="left:944.00px;top:306px;font-size:12.5px;color:#262626;transform:scaleX(0.9835);transform-origin:0 0;">heading. The main section headings, such as</span>
<span class="t" style="left:944.00px;top:327px;font-size:12.5px;color:#262626;transform:scaleX(0.9949);transform-origin:0 0;">"Headings" and "Lists" are level 2 headings. The Tables</span>
<span class="t" style="left:944.00px;top:347px;font-size:12.5px;color:#262626;transform:scaleX(1.0096);transform-origin:0 0;">section contains two sub-headings, "Simple Table" and</span>
<span class="t" style="left:944.00px;top:368px;font-size:12.5px;color:#262626;transform:scaleX(1.0113);transform-origin:0 0;">"Complex Table," which are both level 3 headings.</span>
<span class="t" style="left:944.50px;top:397px;font-size:19px;color:#151515;font-weight:bold;transform:scaleX(0.8907);transform-origin:0 0;">Lists</span>
<div class="a" style="left:1267.5px;top:198.5px;width:27px;height:27px;background:radial-gradient(circle, #e9705e 0 36%, #f3a877 44%, #f9dca6 56%, #fcebc6 78%, rgba(255,255,255,0) 98%);border-radius:50%;"></div>
<svg class="a" style="left:1274px;top:193px;" width="8" height="8" viewBox="0 0 8 8"><path d="M1 1 l6 6 M7 1 l-6 6" stroke="#777" stroke-width="1.300"/></svg>
<div class="a" style="left:915px;top:436px;width:365px;height:1.3px;background:#b4b4b4;"></div>
<div class="a" style="left:915px;top:437.3px;width:365px;height:2px;background:#e8e8e8;"></div>
<div class="a" style="left:915px;top:439.3px;width:365px;height:1px;background:#cccccc;"></div>
<span class="t" style="left:922.00px;top:446px;font-size:11px;color:#5a5a5a;transform:scaleX(1.0090);transform-origin:0 0;">Revised Document (Sample Document1.docx - Mark Vincent Band</span>
<svg class="a" style="left:1274px;top:447px;" width="8" height="8" viewBox="0 0 8 8"><path d="M1.500 1 l6 6 M7.500 1 l-6 6" stroke="#666" stroke-width="1.300"/></svg>
<span class="t" style="left:944.50px;top:475px;font-size:25.5px;color:#aa1c15;font-weight:bold;transform:scaleX(1.0226);transform-origin:0 0;">Sample Document</span>
<span class="t" style="left:944.00px;top:523px;font-size:12.5px;color:#262626;transform:scaleX(0.9966);transform-origin:0 0;">This document was created using accessibility</span>
<span class="t" style="left:944.00px;top:543px;font-size:12.5px;color:#262626;transform:scaleX(1.0163);transform-origin:0 0;">techniques for headings, lists, image alternate text,</span>
<span class="t" style="left:944.00px;top:563px;font-size:12.5px;color:#262626;transform:scaleX(1.0123);transform-origin:0 0;">tables, and columns. It should be completely</span>
<span class="t" style="left:944.00px;top:583px;font-size:12.5px;color:#262626;transform:scaleX(0.9743);transform-origin:0 0;">accessible using assistive technologies such as screen</span>
<span class="t" style="left:944.00px;top:603px;font-size:12.5px;color:#262626;transform:scaleX(0.9813);transform-origin:0 0;">readers.</span>
<span class="t" style="left:944.50px;top:633px;font-size:19.5px;color:#151515;font-weight:bold;transform:scaleX(0.9947);transform-origin:0 0;">Headings(main)</span>
<span class="t" style="left:944.00px;top:672px;font-size:12.5px;color:#262626;transform:scaleX(1.0070);transform-origin:0 0;">There are eight section headings in this document.</span>
<svg class="a" style="left:1229px;top:668px;" width="18" height="19" viewBox="0 0 18 19"><path d="M1.200 1.800 L5 1 L9.500 10 L11 3.500 L16.400 1.200 L16.600 17.600 L11.500 17 L10.600 12.500 L7 15 L5 17.500 L1.400 17.800z" fill="#2a2a2a"/><path d="M5.500 4 L9 11.500" stroke="#777" stroke-width="0.900"/><path d="M12 5 L11.400 13" stroke="#666" stroke-width="0.900"/></svg>
<!-- p_status -->
<div class="a" style="left:2px;top:691px;width:1278px;height:21.3px;background:#2b579a;"></div>
<span class="t" style="left:9.00px;top:696px;font-size:11.5px;color:#fff;transform:scaleX(0.9235);transform-origin:0 0;">400 words</span>
<svg class="a" style="left:76px;top:695px;" width="15" height="14" viewBox="0 0 15 14"><path d="M1 1.500 h6 v9 h-6z M7 1.500 h6.500 v9 h-6.500" fill="none" stroke="#e8eef8" stroke-width="1.100"/><path d="M8.800 3.800 l3.200 4.200 M12 3.800 l-3.200 4.200" stroke="#e8eef8" stroke-width="1.100"/><path d="M6 10.500 l1.200 2 l1.200 -2" fill="none" stroke="#e8eef8" stroke-width="1"/></svg>
<svg class="a" style="left:109.5px;top:694.5px;" width="14" height="14" viewBox="0 0 14 14"><rect x="1.500" y="3" width="11" height="9.500" fill="none" stroke="#e8eef8" stroke-width="1.100"/><rect x="0.800" y="0.600" width="4" height="4" fill="#e8eef8"/><path d="M4 10.500 v-2.500 M6.500 10.500 v-4 M9 10.500 v-3 M11 10.500 v-5" stroke="#e8eef8" stroke-width="1.200"/></svg>
<div class="a" style="left:1079px;top:691px;width:37px;height:21.3px;background:#1a3870;"></div>
<svg class="a" style="left:1015.5px;top:694.5px;" width="14" height="13" viewBox="0 0 14 13"><path d="M1 1.500 q3 -1.500 6 0 q3 -1.500 6 0 v9 q-3 -1.500 -6 0 q-3 -1.500 -6 0z" fill="#8ea8d2" stroke="#e8eef8" stroke-width="1.100"/><path d="M7 1.500 v10.500" stroke="#e8eef8" stroke-width="1.200"/></svg>
<svg class="a" style="left:1053px;top:694.8px;" width="14" height="13" viewBox="0 0 14 13"><rect x="0.600" y="0.600" width="12" height="11" fill="#8ea8d2" stroke="#e8eef8" stroke-width="1.100"/><path d="M2.500 3.200 h8 M2.500 5.400 h8 M2.500 7.600 h8 M2.500 9.600 h8" stroke="#e8eef8" stroke-width="0.900"/></svg>
<svg class="a" style="left:1090px;top:694.5px;" width="15" height="14" viewBox="0 0 15 14"><rect x="0.600" y="0.600" width="9.500" height="10" fill="#7f98c2" stroke="#e8eef8" stroke-width="1"/><path d="M2.200 3 h6 M2.200 5 h4" stroke="#e8eef8" stroke-width="0.900"/><circle cx="10.200" cy="9.200" r="3.600" fill="#3a72c4" stroke="#e8eef8" stroke-width="1"/><path d="M8.500 8 q1.700 1 1 3.500" fill="none" stroke="#e8eef8" stroke-width="0.800"/></svg>
<div class="a" style="left:1123px;top:701px;width:5.5px;height:1.2px;background:#9fb3d6;"></div>
<div class="a" style="left:1133px;top:701px;width:95px;height:1.2px;background:#c5d2e8;"></div>
<div class="a" style="left:1179.8px;top:696px;width:4.4px;height:11.2px;background:#f4f6fa;"></div>
<svg class="a" style="left:1230.5px;top:697.5px;" width="9" height="9" viewBox="0 0 9 9"><path d="M4.500 1 v7 M1 4.500 h7" stroke="#c5d2e8" stroke-width="1.200"/></svg>
<span class="t" style="left:1252.50px;top:696px;font-size:11.5px;color:#fff;transform:scaleX(0.8840);transform-origin:0 0;">100%</span>
</body></html>
